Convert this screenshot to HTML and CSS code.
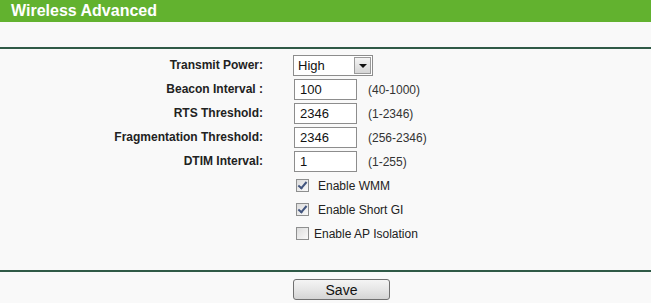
FILE: index.html
```html
<!DOCTYPE html>
<html lang="en">
<head>
    <meta charset="UTF-8">
    <title>Wireless Advanced</title>
    <link rel="stylesheet" href="styles.css">
</head>
<body>
    <div class="title">Wireless Advanced</div>
    <div class="panel">
        <div class="form-grid">
            <label class="label">Transmit Power:</label>
            <div class="field">
                <span class="select-wrap">
                    <select class="select">
                        <option>High</option>
                        <option>Middle</option>
                        <option>Low</option>
                    </select>
                    <span class="select-btn"><span class="caret"></span></span>
                </span>
            </div>

            <label class="label">Beacon Interval :</label>
            <div class="field"><input class="text" type="text" value="100"><span class="hint">(40-1000)</span></div>

            <label class="label">RTS Threshold:</label>
            <div class="field"><input class="text" type="text" value="2346"><span class="hint">(1-2346)</span></div>

            <label class="label">Fragmentation Threshold:</label>
            <div class="field"><input class="text" type="text" value="2346"><span class="hint">(256-2346)</span></div>

            <label class="label">DTIM Interval:</label>
            <div class="field"><input class="text" type="text" value="1"><span class="hint">(1-255)</span></div>

            <div class="field check-row"><input class="check" type="checkbox" checked><span class="check-text">Enable WMM</span></div>
            <div class="field check-row"><input class="check" type="checkbox" checked><span class="check-text">Enable Short GI</span></div>
            <div class="field check-row"><input class="check" type="checkbox"><span class="check-text narrow">Enable AP Isolation</span></div>
        </div>
    </div>
    <div class="actions">
        <button class="save" type="button">Save</button>
    </div>
</body>
</html>
```

FILE: styles.css
```css
body {
    margin: 0;
    padding: 0;
    background: #f9f9f9;
    font-family: 'Liberation Sans', Arial, sans-serif;
    color: #222;
}
.title {
    height: 22px;
    line-height: 22px;
    background: #62b22f;
    color: #fff;
    font-size: 16px;
    font-weight: bold;
    padding-left: 11px;
}
.panel {
    margin-top: 25px;
    border-top: 2px solid #2f5a47;
    border-bottom: 2px solid #2f5a47;
    padding: 6px 0 26px 0;
}
.form-grid {
    display: grid;
    grid-template-columns: 263px 1fr;
    column-gap: 30px;
    row-gap: 3px;
}
.label {
    grid-column: 1;
    text-align: right;
    font-size: 12px;
    font-weight: bold;
    line-height: 21px;
    color: #222;
}
.field {
    grid-column: 2;
    display: flex;
    align-items: center;
    gap: 11px;
    height: 21px;
}
.select-wrap {
    position: relative;
    display: inline-block;
    width: 80px;
    height: 21px;
}
.select {
    appearance: none;
    -webkit-appearance: none;
    box-sizing: border-box;
    width: 80px;
    height: 21px;
    margin: 0;
    padding: 0 0 0 4px;
    border: 1px solid #7f9db9;
    border-color: #8d8d8d;
    background: #fff;
    font-family: 'Liberation Sans', Arial, sans-serif;
    font-size: 13px;
    color: #111;
    border-radius: 0;
}
.select-btn {
    position: absolute;
    top: 2px;
    right: 2px;
    width: 15px;
    height: 15px;
    border: 1px solid #9a9a9a;
    background: linear-gradient(180deg, #f4f4f4 0%, #d6d6d6 100%);
    display: flex;
    align-items: center;
    justify-content: center;
}
.caret {
    width: 0;
    height: 0;
    border-left: 4px solid transparent;
    border-right: 4px solid transparent;
    border-top: 4px solid #111;
}
.text {
    box-sizing: border-box;
    width: 63px;
    height: 21px;
    margin: 0 0 0 1px;
    padding: 0 0 0 5px;
    border: 1px solid #8d8d8d;
    background: #fff;
    font-family: 'Liberation Sans', Arial, sans-serif;
    font-size: 13px;
    color: #111;
    border-radius: 0;
    outline: none;
}
.hint {
    font-size: 12px;
    color: #333;
}
.check-row {
    gap: 9px;
}
.check {
    appearance: none;
    -webkit-appearance: none;
    box-sizing: border-box;
    width: 13px;
    height: 13px;
    margin: 0 0 0 3px;
    border: 1px solid #8e8f8f;
    background: linear-gradient(135deg, #dcdcdc 0%, #fafafa 100%);
    position: relative;
}
.check:checked::after {
    content: "";
    position: absolute;
    left: 3px;
    top: 0;
    width: 3px;
    height: 7px;
    border-right: 2px solid #42557e;
    border-bottom: 2px solid #42557e;
    transform: rotate(40deg);
}
.check-text {
    font-size: 12px;
    color: #222;
}
.check-text.narrow {
    margin-left: -4px;
}
.actions {
    padding: 7px 0 0 293px;
}
.save {
    width: 97px;
    height: 21px;
    margin: 0;
    padding: 0;
    border: 1px solid #707070;
    border-radius: 3px;
    background: linear-gradient(180deg, #f4f4f4 0%, #e6e6e6 50%, #d4d4d4 100%);
    font-family: 'Liberation Sans', Arial, sans-serif;
    font-size: 14px;
    color: #111;
}
```
